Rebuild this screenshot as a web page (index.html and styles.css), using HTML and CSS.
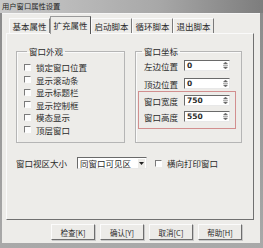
FILE: index.html
```html
<!DOCTYPE html>
<html>
<head>
    <title>用户窗口属性设置</title>
    <link rel="stylesheet" href="styles.css">
</head>
<body>
    <div class="window">
        <div class="titlebar">用户窗口属性设置</div>
        <div class="client">
            <div class="tabs">
                <div class="tab">基本属性</div>
                <div class="tab active">扩充属性</div>
                <div class="tab">启动脚本</div>
                <div class="tab">循环脚本</div>
                <div class="tab">退出脚本</div>
            </div>
            <div class="panel">
                <div class="groups">
                    <fieldset class="group group-look">
                        <legend>窗口外观</legend>
                        <label class="check"><span class="box"></span>锁定窗口位置</label>
                        <label class="check"><span class="box"></span>显示滚动条</label>
                        <label class="check"><span class="box"></span>显示标题栏</label>
                        <label class="check"><span class="box"></span>显示控制框</label>
                        <label class="check"><span class="box"></span>模态显示</label>
                        <label class="check"><span class="box"></span>顶层窗口</label>
                    </fieldset>
                    <fieldset class="group group-pos">
                        <legend>窗口坐标</legend>
                        <div class="field">
                            <span class="field-label">左边位置</span>
                            <span class="spin"><span class="value">0</span><svg class="arrows" width="5" height="9" viewBox="0 0 5 9"><path d="M2.5 1 L4.5 3 L0.5 3 Z M0 4.5 H5 M0.5 6 L4.5 6 L2.5 8 Z" fill="#666" stroke="#666" stroke-width="0.5"/></svg></span>
                        </div>
                        <div class="field">
                            <span class="field-label">顶边位置</span>
                            <span class="spin"><span class="value">0</span><svg class="arrows" width="5" height="9" viewBox="0 0 5 9"><path d="M2.5 1 L4.5 3 L0.5 3 Z M0 4.5 H5 M0.5 6 L4.5 6 L2.5 8 Z" fill="#666" stroke="#666" stroke-width="0.5"/></svg></span>
                        </div>
                        <div class="marked">
                            <div class="field">
                                <span class="field-label">窗口宽度</span>
                                <span class="spin"><span class="value">750</span><svg class="arrows" width="5" height="9" viewBox="0 0 5 9"><path d="M2.5 1 L4.5 3 L0.5 3 Z M0 4.5 H5 M0.5 6 L4.5 6 L2.5 8 Z" fill="#666" stroke="#666" stroke-width="0.5"/></svg></span>
                            </div>
                            <div class="field">
                                <span class="field-label">窗口高度</span>
                                <span class="spin"><span class="value">550</span><svg class="arrows" width="5" height="9" viewBox="0 0 5 9"><path d="M2.5 1 L4.5 3 L0.5 3 Z M0 4.5 H5 M0.5 6 L4.5 6 L2.5 8 Z" fill="#666" stroke="#666" stroke-width="0.5"/></svg></span>
                            </div>
                        </div>
                    </fieldset>
                </div>
                <div class="view-row">
                    <span class="view-label">窗口视区大小</span>
                    <span class="select"><span class="value">同窗口可见区</span><span class="drop"><svg width="5" height="3" viewBox="0 0 5 3"><path d="M0 0 H5 L2.5 3 Z" fill="#222"/></svg></span></span>
                    <label class="check inline"><span class="box"></span>横向打印窗口</label>
                </div>
            </div>
            <div class="buttons">
                <button>检查[K]</button>
                <button>确认[Y]</button>
                <button>取消[C]</button>
                <button>帮助[H]</button>
            </div>
        </div>
    </div>
</body>
</html>
```

FILE: styles.css
```css
* { box-sizing: border-box; margin: 0; padding: 0; }

body {
    width: 263px;
    height: 248px;
    overflow: hidden;
    font-family: "Noto Sans CJK SC", "Noto Sans", sans-serif;
    font-size: 8.5px;
    color: #2a2a2a;
    background: #8c8c8c;
}

.window {
    display: flex;
    flex-direction: column;
    height: 248px;
    background: linear-gradient(180deg, #8a8a8a 0%, #a9a9a9 100%);
}

.titlebar {
    height: 13px;
    line-height: 12px;
    padding-left: 2px;
    font-size: 7.3px;
    color: #1e1e1e;
    background: linear-gradient(90deg, #c9c9c9 0%, #a8a8a8 60%, #7d7d7d 100%);
}

.client {
    flex: 1;
    display: flex;
    flex-direction: column;
    margin: 0 3px 5px 2px;
    padding: 1px 6px 0 4px;
    background: #edece9;
    border-top: 1px solid #f6f6f6;
}

/* tab strip */
.tabs {
    display: flex;
    height: 18px;
    padding-left: 3px;
    align-items: flex-end;
}

.tab {
    width: 41px;
    height: 15px;
    line-height: 14px;
    text-align: center;
    border-left: 1px solid #fafafa;
    border-right: 1px solid #7a7a7a;
    border-top: 1px solid #fafafa;
}

.tab.active {
    height: 18px;
    line-height: 16px;
    margin-bottom: -1px;
    background: #edece9;
    border-left: 1px solid #9a9a9a;
    border-top: 1px solid #9a9a9a;
    border-right: 1px solid #555;
    position: relative;
    z-index: 1;
}

.panel {
    height: 187px;
    display: flex;
    flex-direction: column;
    padding: 11px 11px 0 9px;
    border-top: 1px solid #fafafa;
    border-left: 1px solid #fafafa;
    border-right: 1px solid #707070;
    border-bottom: 1px solid #707070;
}

.groups {
    display: flex;
    gap: 10px;
    height: 98px;
}

.group {
    border: 1px solid #b5b5b5;
    box-shadow: 1px 1px 0 #fafafa inset;
}

.group legend {
    margin-left: 3px;
    padding: 0 2px;
    line-height: 12px;
}

.group-look {
    width: 111px;
    padding: 4px 0 0 7px;
}

.group-pos {
    width: 107px;
    padding: 3px 5px 0 3px;
}

/* check boxes */
.check {
    display: flex;
    align-items: center;
    gap: 5px;
    height: 12.5px;
    white-space: nowrap;
}

.box {
    width: 7px;
    height: 7px;
    background: #fdfdfd;
    border-top: 1px solid #7a7a7a;
    border-left: 1px solid #7a7a7a;
    border-right: 1px solid #fdfdfd;
    border-bottom: 1px solid #fdfdfd;
}

/* coordinate fields */
.field {
    display: flex;
    align-items: center;
    height: 11px;
    padding-left: 5px;
    margin-bottom: 7px;
}

.field-label {
    width: 40px;
}

.spin, .select {
    display: flex;
    align-items: center;
    justify-content: space-between;
    height: 11px;
    background: #fff;
    border-top: 1px solid #6a6a6a;
    border-left: 1px solid #6a6a6a;
    border-right: 1px solid #e8e8e8;
    border-bottom: 1px solid #e8e8e8;
}

.spin {
    width: 46px;
    padding: 0 1px 0 2px;
}

.value {
    font-family: "DejaVu Sans", sans-serif;
    font-weight: bold;
    font-size: 7.5px;
    line-height: 9px;
}

.select .value {
    flex: 1;
    white-space: nowrap;
    font-family: "Noto Sans CJK SC", sans-serif;
    font-weight: normal;
    font-size: 8.5px;
    line-height: 10px;
}

.arrows {
    display: block;
}

.marked {
    margin: -5px 0 0 -1px;
    width: 98px;
    padding: 3px 0 0 0;
    border: 1px solid #d28f8f;
}

.marked .field {
    margin-bottom: 5px;
}

.marked .field:last-child {
    margin-bottom: 6px;
}

/* bottom row */
.view-row {
    display: flex;
    align-items: center;
    margin-top: 14px;
    height: 12px;
}

.view-label {
    width: 61px;
    white-space: nowrap;
}

.select {
    width: 70px;
    height: 12px;
    padding-left: 2px;
}

.drop {
    flex: none;
    width: 7px;
    height: 9px;
    margin-right: 1px;
    display: flex;
    align-items: center;
    justify-content: center;
    background: #ecebe8;
}

.check.inline {
    margin-left: 8px;
}

.buttons {
    display: flex;
    gap: 5px;
    padding: 4px 0 0 45px;
}

button {
    width: 44px;
    height: 16px;
    font-family: "Noto Sans CJK SC", sans-serif;
    font-size: 7.5px;
    color: #2a2a2a;
    background: #ecebe8;
    border-top: 1px solid #fbfbfb;
    border-left: 1px solid #fbfbfb;
    border-right: 1px solid #6e6e6e;
    border-bottom: 1px solid #6e6e6e;
    box-shadow: 1px 1px 0 #c8c8c8;
}
```
